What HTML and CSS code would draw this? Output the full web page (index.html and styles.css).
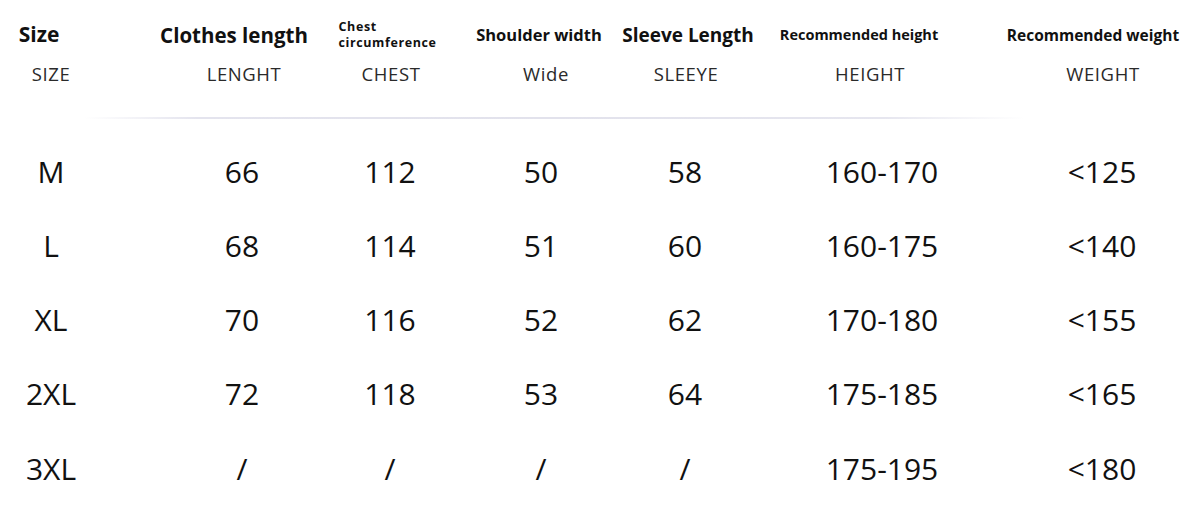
FILE: index.html
```html
<!DOCTYPE html>
<html>
<head>
<meta charset="utf-8">
<link rel="stylesheet" href="styles.css">
</head>
<body>
<div class="chart">
  <div class="row head">
    <div class="cell"><span class="h h-size">Size</span></div>
    <div class="cell"><span class="h h-len">Clothes length</span></div>
    <div class="cell"><span class="h h-chest">Chest<br>circumference</span></div>
    <div class="cell"><span class="h h-sh">Shoulder width</span></div>
    <div class="cell"><span class="h h-sl">Sleeve Length</span></div>
    <div class="cell"><span class="h h-ht">Recommended height</span></div>
    <div class="cell"><span class="h h-wt">Recommended weight</span></div>
  </div>
  <div class="row sub">
    <div class="cell"><span>SIZE</span></div>
    <div class="cell"><span class="s-len">LENGHT</span></div>
    <div class="cell"><span class="s-chest">CHEST</span></div>
    <div class="cell"><span class="s-wide">Wide</span></div>
    <div class="cell"><span class="s-sl">SLEEYE</span></div>
    <div class="cell"><span class="s-ht">HEIGHT</span></div>
    <div class="cell"><span class="s-wt">WEIGHT</span></div>
  </div>
  <div class="rule"></div>
  <div class="row data">
    <div class="cell">M</div><div class="cell">66</div><div class="cell">112</div><div class="cell">50</div><div class="cell">58</div><div class="cell">160-170</div><div class="cell">&lt;125</div>
  </div>
  <div class="row data">
    <div class="cell">L</div><div class="cell">68</div><div class="cell">114</div><div class="cell">51</div><div class="cell">60</div><div class="cell">160-175</div><div class="cell">&lt;140</div>
  </div>
  <div class="row data">
    <div class="cell">XL</div><div class="cell">70</div><div class="cell">116</div><div class="cell">52</div><div class="cell">62</div><div class="cell">170-180</div><div class="cell">&lt;155</div>
  </div>
  <div class="row data">
    <div class="cell">2XL</div><div class="cell">72</div><div class="cell">118</div><div class="cell">53</div><div class="cell">64</div><div class="cell">175-185</div><div class="cell">&lt;165</div>
  </div>
  <div class="row data">
    <div class="cell">3XL</div><div class="cell">/</div><div class="cell">/</div><div class="cell">/</div><div class="cell">/</div><div class="cell">175-195</div><div class="cell">&lt;180</div>
  </div>
</div>
</body>
</html>
```

FILE: styles.css
```css
html, body {
  margin: 0;
  padding: 0;
  background: #ffffff;
}
body {
  width: 1200px;
  height: 516px;
  overflow: hidden;
  font-family: "Open Sans", "Noto Sans", sans-serif;
  color: #111;
}
.chart {
  padding-top: 10px;
}
.row {
  display: flex;
  align-items: center;
}
.cell {
  display: flex;
  justify-content: center;
  align-items: center;
  white-space: nowrap;
  height: 100%;
}
.row .cell:nth-child(1) { width: 82px; margin-left: 10px; }
.row .cell:nth-child(2) { width: 140px; margin-left: 80px; }
.row .cell:nth-child(3) { width: 120px; margin-left: 18px; }
.row .cell:nth-child(4) { width: 140px; margin-left: 21px; }
.row .cell:nth-child(5) { width: 130px; margin-left: 9px; }
.row .cell:nth-child(6) { width: 170px; margin-left: 47px; }
.row .cell:nth-child(7) { width: 190px; margin-left: 40px; }

/* header */
.head { height: 50px; }
.h {
  font-weight: 700;
  color: #111;
  line-height: 1.2;
}
.h-size { font-size: 21px; margin-right: 24px; }
.h-len { font-size: 20.5px; margin-right: 16px; }
.h-chest {
  font-size: 12.5px;
  line-height: 16px;
  letter-spacing: 0.6px;
  margin-right: 5px;
  margin-top: -1px;
  text-align: left;
}
.h-sh { font-size: 16.5px; margin-right: 4px; }
.h-sl { font-size: 19px; margin-left: 6px; }
.h-ht { font-size: 14.5px; margin-right: 46px; }
.h-wt { font-size: 15.5px; margin-right: 18px; }

/* sub labels */
.sub {
  height: 26px;
  font-size: 18.5px;
  color: #2a2a2a;
}
.sub span { letter-spacing: 0.6px; }
.s-len { margin-left: 4px; }
.s-chest { margin-left: 2px; }
.s-wide { margin-left: 10px; }
.s-sl { margin-left: 2px; }
.s-ht { margin-right: 24px; }
.s-wt { margin-left: 2px; }

/* rule */
.rule {
  margin: 31px 0 15px 84px;
  width: 941px;
  height: 2px;
  background: linear-gradient(to right, rgba(225,225,236,0) 0%, #e4e4ee 12%, #e2e2ec 50%, #e6e6ef 85%, rgba(230,230,240,0) 100%);
}

/* data */
.data {
  height: 74.25px;
  font-size: 30px;
  color: #111;
}
```
